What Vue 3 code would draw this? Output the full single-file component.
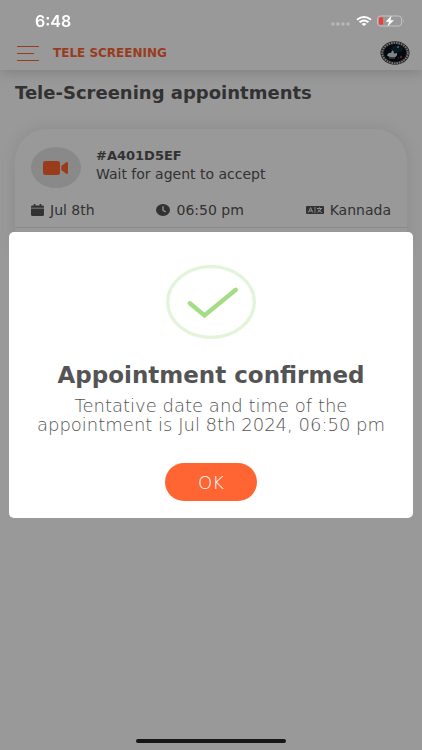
<template>
    <div class="screen">

        <div class="status-bar">
            <span class="clock">6:48</span>
            <div class="status-icons">
                <svg width="20" height="4" viewBox="0 0 20 4" fill="#b9b9b9">
                    <circle v-for="n in 4" :key="n" :cx="n * 5 - 3" cy="2" r="1.7" />
                </svg>
                <svg width="16" height="10" viewBox="0 0 16 10" fill="none" stroke="#fff" stroke-width="2">
                    <path d="M1 3.7 Q8 -1.6 15 3.7" />
                    <path d="M3.5 6.2 Q8 2.7 12.5 6.2" />
                    <path d="M8 10 L5.5 7.9 Q8 6.2 10.5 7.9 Z" fill="#fff" stroke="none" />
                </svg>
                <svg width="28" height="12" viewBox="0 0 28 12">
                    <rect x=".6" y="1" width="24" height="10" rx="3" fill="none" stroke="#c4c4c4" />
                    <path d="M26 4.3 Q27.6 6 26 7.7 Z" fill="#c4c4c4" />
                    <rect x="2" y="2.3" width="4" height="7.4" rx="1" fill="#f23d35" />
                    <path d="M14.5 .5 L8.7 6.8 H12 L10.5 11.5 L17 5.2 H13.5 Z" fill="#fff" />
                </svg>
            </div>
        </div>

        <header class="nav-bar">
            <button class="menu" type="button" aria-label="Menu">
                <span></span>
                <span class="short"></span>
                <span></span>
            </button>
            <span class="nav-title">TELE SCREENING</span>
            <svg class="avatar" width="30" height="24" viewBox="0 0 30 24">
                <ellipse cx="15" cy="12" rx="14.5" ry="11.7" fill="#333" />
                <ellipse cx="15" cy="12" rx="12.8" ry="10.2" fill="none" stroke="#c5c0c2" stroke-width="2" stroke-dasharray="1.6 .9" />
                <ellipse cx="15" cy="12" rx="11" ry="8.7" fill="#07101c" />
                <ellipse cx="17" cy="8" rx="6" ry="3.5" fill="#102a3c" />
                <path d="M7 14 Q9 11 11 12 L12 9.5 L13.5 10 L14 12.5 L17 12 Q18 14 15.5 16 Q11 17 7.5 15 Z" fill="#d5dedc" />
                <path d="M9 17 H15" stroke="#8b9a9c" />
                <circle cx="18" cy="6" r=".9" fill="#9dbad0" />
                <circle cx="21" cy="16" r="1.2" fill="#a23543" />
                <circle cx="18.5" cy="17" r=".7" fill="#a23543" />
            </svg>
        </header>

        <main class="content">
            <h1>Tele-Screening appointments</h1>

            <article class="card">
                <div class="card-top">
                    <div class="video">
                        <svg width="26" height="14" viewBox="0 0 26 14" fill="#ff6433">
                            <rect x="0" y="0" width="17" height="14" rx="2.2" />
                            <path d="M18.2 5 L23.2 1.3 Q25 .5 25 2.2 V11.8 Q25 13.5 23.2 12.7 L18.2 9 Z" />
                        </svg>
                    </div>
                    <div class="card-text">
                        <strong>#{{ appointment.id }}</strong>
                        <span>{{ appointment.status }}</span>
                    </div>
                </div>
                <div class="details">
                    <span class="detail">
                        <svg width="13" height="12" viewBox="0 0 13 12" fill="#545454">
                            <path d="M2.8 0 H4.4 V1.5 H8.6 V0 H10.2 V1.5 H11.5 Q13 1.5 13 2.8 V3.7 H0 V2.8 Q0 1.5 1.5 1.5 H2.8 Z" />
                            <path d="M0 4.5 H13 V10.7 Q13 12 11.5 12 H1.5 Q0 12 0 10.7 Z" />
                        </svg>
                        {{ appointment.date }}
                    </span>
                    <span class="detail">
                        <svg width="14" height="12" viewBox="0 0 14 12">
                            <ellipse cx="7" cy="6" rx="7" ry="6" fill="#545454" />
                            <path d="M7 2.3 V6.2 L9.7 8" fill="none" stroke="#fff" stroke-width="1.3" />
                        </svg>
                        {{ appointment.time }}
                    </span>
                    <span class="detail">
                        <svg width="18" height="8" viewBox="0 0 18 8">
                            <rect width="18" height="8" rx="1" fill="#545454" />
                            <path d="M9 .8 V7.2" stroke="#fff" stroke-width=".8" />
                            <path d="M2.4 6.5 L4.6 1.6 L6.8 6.5 M3.3 5 H5.9 M11 2.5 H16 M13.5 1.3 V2.5 M15 2.6 Q14.2 5 11.4 6.4 M12 3.6 Q13 5.3 15.6 6.4" fill="none" stroke="#fff" stroke-width=".9" />
                        </svg>
                        {{ appointment.language }}
                    </span>
                </div>
                <div class="card-foot"></div>
            </article>
        </main>

        <div class="overlay">
            <section class="modal" role="dialog" aria-modal="true" aria-labelledby="modal-title">
                <svg width="90" height="74" viewBox="0 0 90 74" fill="none">
                    <ellipse cx="45" cy="37" rx="43.3" ry="35.4" stroke="#e4f4da" stroke-width="3.4" />
                    <path d="M23.8 38.3 L38.5 50.5 L69.8 24.8" stroke="#a5dc86" stroke-width="4.4" stroke-linecap="round" />
                </svg>
                <h2 id="modal-title">Appointment confirmed</h2>
                <p>Tentative date and time of the appointment is Jul 8th 2024, 06:50 pm</p>
                <button class="ok" type="button">OK</button>
            </section>
        </div>

        <div class="home-bar"></div>

    </div>
</template>

<script setup>
const appointment = {
    id: "A401D5EF",
    status: "Wait for agent to accept",
    date: "Jul 8th",
    time: "06:50 pm",
    language: "Kannada",
};
</script>

<style>
body {
    margin: 0;
    background: #fff;
}
</style>

<style scoped>
.screen {
    min-height: 100vh;
    font-family: "DejaVu Sans", Verdana, sans-serif;
    color: #545454;
}

.screen * {
    box-sizing: border-box;
}

svg {
    display: block;
    flex: none;
}

.status-bar {
    position: relative;
    z-index: 3; /* above the overlay */
    display: flex;
    align-items: center;
    justify-content: space-between;
    height: 36px;
    padding: 6px 17px 0 35px;
    color: #fff;
}

.clock {
    font: 600 16px/20px Inter, sans-serif;
}

.status-icons {
    display: flex;
    align-items: center;
    gap: 5px;
}

.status-icons svg:first-child {
    margin-top: 6px;
}

.nav-bar {
    display: flex;
    align-items: center;
    height: 34px;
    padding: 0 12px 0 17px;
    box-shadow: 0 2px 14px rgba(0, 0, 0, 0.18);
    clip-path: inset(0 0 -24px 0);
}

.menu {
    display: flex;
    flex-direction: column;
    gap: 6px;
    width: 22px;
    padding: 0;
    border: 0;
    background: none;
}

.menu span {
    width: 22px;
    height: 1px;
    background: #ff6433;
}

.menu .short {
    width: 17px;
}

.nav-title {
    margin-left: 14px;
    font-size: 12px;
    font-weight: bold;
    color: #ff6433;
}

.avatar {
    margin-left: auto;
}

.content {
    padding: 13px 15px;
}

h1 {
    margin: 0;
    font-size: 18px;
    line-height: 20px;
}

.card {
    margin-top: 26px;
    border-radius: 32px;
    background: #fff;
    box-shadow: 0 0 16px rgba(0, 0, 0, 0.1);
}

.card-top {
    display: flex;
    align-items: flex-start;
    gap: 15px;
    padding: 18px 16px 0;
}

.video {
    display: flex;
    align-items: center;
    justify-content: center;
    width: 50px;
    height: 41px;
    border-radius: 50%;
    background: #e4e4e4;
}

.card-text {
    display: flex;
    flex-direction: column;
    font-size: 14px;
    line-height: 18px;
}

.card-text strong {
    font-size: 13px;
}

.details {
    display: flex;
    justify-content: space-between;
    padding: 12px 16px 7px;
}

.detail {
    display: flex;
    align-items: center;
    gap: 6px;
    font-size: 14px;
    line-height: 20px;
}

.card-foot {
    height: 40px;
    border-top: 1px solid #e4e4e4;
}

.overlay {
    position: fixed;
    inset: 0;
    z-index: 2;
    display: flex;
    align-items: center;
    padding: 0 9px;
    background: rgba(0, 0, 0, 0.4);
}

.modal {
    display: flex;
    flex: 1;
    flex-direction: column;
    align-items: center;
    padding: 33px 24px 17px;
    border-radius: 5px;
    background: #fff;
    text-align: center;
}

h2 {
    margin: 22px 0 7px;
    font-size: 23px;
    line-height: 28px;
}

p {
    margin: 0;
    font-size: 18px;
    font-weight: 200;
    line-height: 19px;
}

.ok {
    width: 92px;
    height: 38px;
    margin-top: 29px;
    border: 0;
    border-radius: 19px;
    background: #ff6433;
    color: #fff;
    font-family: inherit;
    font-size: 18px;
    font-weight: 200;
}

.home-bar {
    position: fixed;
    z-index: 3;
    bottom: 7px;
    left: 50%;
    width: 150px;
    height: 4px;
    margin-left: -75px;
    border-radius: 2px;
    background: #161616;
}
</style>
